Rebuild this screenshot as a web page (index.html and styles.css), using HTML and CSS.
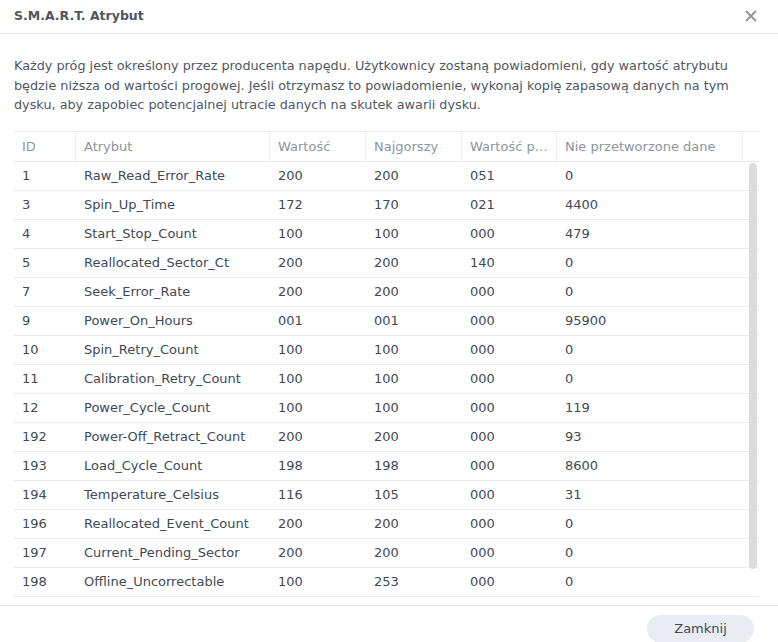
FILE: index.html
```html
<!DOCTYPE html>
<html lang="pl">
<head>
<meta charset="utf-8">
<title>S.M.A.R.T. Atrybut</title>
<link rel="stylesheet" href="styles.css">
</head>
<body>
<div class="dialog">
  <div class="titlebar">
    <div class="title">S.M.A.R.T. Atrybut</div>
    <svg class="close" width="12" height="12" viewBox="0 0 12 12"><path d="M1.5 1.5 L10.5 10.5 M10.5 1.5 L1.5 10.5" stroke="#8e9298" stroke-width="1.8" stroke-linecap="round"/></svg>
  </div>
  <div class="content">
    <p class="desc">Każdy próg jest określony przez producenta napędu. Użytkownicy zostaną powiadomieni, gdy wartość atrybutu będzie niższa od wartości progowej. Jeśli otrzymasz to powiadomienie, wykonaj kopię zapasową danych na tym dysku, aby zapobiec potencjalnej utracie danych na skutek awarii dysku.</p>
    <div class="grid">
      <div class="head">
        <div class="hc c1">ID</div>
        <div class="hc c2">Atrybut</div>
        <div class="hc c3">Wartość</div>
        <div class="hc c4">Najgorszy</div>
        <div class="hc c5">Wartość progowa</div>
        <div class="hc c6">Nie przetworzone dane</div>
        <div class="hc c7"></div>
      </div>
      <div class="body">
        <div class="row"><div class="c1">1</div><div class="c2">Raw_Read_Error_Rate</div><div class="c3">200</div><div class="c4">200</div><div class="c5">051</div><div class="c6">0</div></div>
        <div class="row"><div class="c1">3</div><div class="c2">Spin_Up_Time</div><div class="c3">172</div><div class="c4">170</div><div class="c5">021</div><div class="c6">4400</div></div>
        <div class="row"><div class="c1">4</div><div class="c2">Start_Stop_Count</div><div class="c3">100</div><div class="c4">100</div><div class="c5">000</div><div class="c6">479</div></div>
        <div class="row"><div class="c1">5</div><div class="c2">Reallocated_Sector_Ct</div><div class="c3">200</div><div class="c4">200</div><div class="c5">140</div><div class="c6">0</div></div>
        <div class="row"><div class="c1">7</div><div class="c2">Seek_Error_Rate</div><div class="c3">200</div><div class="c4">200</div><div class="c5">000</div><div class="c6">0</div></div>
        <div class="row"><div class="c1">9</div><div class="c2">Power_On_Hours</div><div class="c3">001</div><div class="c4">001</div><div class="c5">000</div><div class="c6">95900</div></div>
        <div class="row"><div class="c1">10</div><div class="c2">Spin_Retry_Count</div><div class="c3">100</div><div class="c4">100</div><div class="c5">000</div><div class="c6">0</div></div>
        <div class="row"><div class="c1">11</div><div class="c2">Calibration_Retry_Count</div><div class="c3">100</div><div class="c4">100</div><div class="c5">000</div><div class="c6">0</div></div>
        <div class="row"><div class="c1">12</div><div class="c2">Power_Cycle_Count</div><div class="c3">100</div><div class="c4">100</div><div class="c5">000</div><div class="c6">119</div></div>
        <div class="row"><div class="c1">192</div><div class="c2">Power-Off_Retract_Count</div><div class="c3">200</div><div class="c4">200</div><div class="c5">000</div><div class="c6">93</div></div>
        <div class="row"><div class="c1">193</div><div class="c2">Load_Cycle_Count</div><div class="c3">198</div><div class="c4">198</div><div class="c5">000</div><div class="c6">8600</div></div>
        <div class="row"><div class="c1">194</div><div class="c2">Temperature_Celsius</div><div class="c3">116</div><div class="c4">105</div><div class="c5">000</div><div class="c6">31</div></div>
        <div class="row"><div class="c1">196</div><div class="c2">Reallocated_Event_Count</div><div class="c3">200</div><div class="c4">200</div><div class="c5">000</div><div class="c6">0</div></div>
        <div class="row"><div class="c1">197</div><div class="c2">Current_Pending_Sector</div><div class="c3">200</div><div class="c4">200</div><div class="c5">000</div><div class="c6">0</div></div>
        <div class="row"><div class="c1">198</div><div class="c2">Offline_Uncorrectable</div><div class="c3">100</div><div class="c4">253</div><div class="c5">000</div><div class="c6">0</div></div>
        <div class="thumb"></div>
      </div>
    </div>
  </div>
  <div class="footer">
    <button class="btn">Zamknij</button>
  </div>
</div>
</body>
</html>
```

FILE: styles.css
```css
* { box-sizing: border-box; }
html, body { margin: 0; padding: 0; background: #fff; }
body { width: 778px; height: 642px; overflow: hidden; font-family: "DejaVu Sans", Verdana, sans-serif; }
.dialog { width: 778px; height: 642px; display: flex; flex-direction: column; }
.titlebar {
  height: 34px; flex: none; display: flex; align-items: center; justify-content: space-between;
  padding: 0 21px 2px 14px; border-bottom: 1px solid #e6e8eb;
}
.title { font-size: 12.5px; font-weight: bold; color: #4f5660; }
.close { display: block; }
.content { flex: 1; padding: 22px 8px 0 14px; overflow: hidden; display: flex; flex-direction: column; }
.desc {
  margin: 0; font-family: "DejaVu Sans", Verdana, sans-serif;
  font-size: 12.8px; line-height: 19.5px; color: #4f5862; width: 752px;
}
.grid { margin-top: 16px; width: 745px; }
.head { display: flex; height: 31px; border-top: 1px solid #e9ecee; border-bottom: 1px solid #e6e9ec; }
.hc {
  font-size: 13px; color: #8f959c; line-height: 29px; padding: 0 8px;
  border-right: 1px solid #eceef0; white-space: nowrap; overflow: hidden; text-overflow: ellipsis;
}
.hc.c7 { border-right: none; }
.c1 { width: 62px; flex: none; }
.c2 { width: 194px; flex: none; }
.c3 { width: 96px; flex: none; }
.c4 { width: 96px; flex: none; }
.c5 { width: 95px; flex: none; }
.c6 { width: 186px; flex: none; }
.c7 { width: 16px; flex: none; }
.body { position: relative; height: 436px; overflow: hidden; }
.row { display: flex; height: 29px; border-bottom: 1px solid #e8eaed; font-size: 13px; color: #414a54; line-height: 28px; }
.row > div { padding-left: 8px; white-space: nowrap; overflow: hidden; }
.thumb {
  position: absolute; left: 735px; top: 1px; width: 8px; height: 406px;
  background: #dcdcdc; border-radius: 4px;
}
.footer {
  height: 37px; flex: none; border-top: 1px solid #e6e8eb; display: flex; justify-content: flex-end;
  align-items: flex-start; padding: 9px 24px 0 0;
}
.btn {
  width: 107px; height: 28px; border: none; border-radius: 14px; background: #e9edf3;
  font-family: "DejaVu Sans", Verdana, sans-serif; font-size: 13px; color: #414a54; padding: 0 0 1px 0;
}
```
